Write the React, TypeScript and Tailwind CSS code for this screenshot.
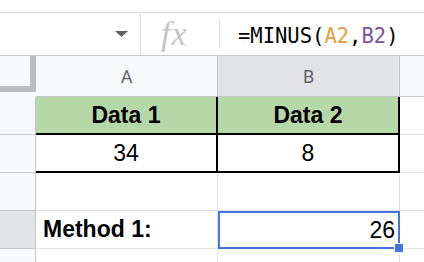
import React from "react";

const sans = "font-['Liberation_Sans',Arial,sans-serif]";

function RowHead({ active = false, h = "h-[38px]" }: { active?: boolean; h?: string }) {
  return (
    <div
      className={`${h} w-[36px] shrink-0 border-r border-b border-[#c4c7c5] ${
        active ? "bg-[#e1e3e6]" : "bg-[#f8f9fa]"
      }`}
    />
  );
}

export default function App() {
  return (
    <div className={`w-[424px] h-[262px] overflow-hidden bg-white ${sans}`}>
      {/* top strip */}
      <div className="h-[13px] border-b border-[#dadce0]" />

      {/* formula bar */}
      <div className="flex h-[43px] items-center border-b border-[#c7c7c7]">
        <div className="flex h-full w-[141px] items-center justify-end border-r border-[#e0e0e0] pr-[12px]">
          <svg width="13" height="6" viewBox="0 0 13 6">
            <path d="M0 0h13L6.5 6z" fill="#5f6368" />
          </svg>
        </div>
        <div className="flex h-full w-[78px] items-center pl-[20px]">
          <span className="font-['Liberation_Serif',serif] text-[34px] italic leading-none tracking-[1px] text-[#c4c4c4]">
            fx
          </span>
        </div>
        <div className="h-[30px] w-px bg-[#e0e0e0]" />
        <div className="mt-[4px] pl-[18px] font-['DejaVu_Sans_Mono',monospace] text-[20.5px] leading-none text-black">
          =MINUS(<span className="text-[#e69f3b]">A2</span>,
          <span className="text-[#7b4fa0]">B2</span>)
        </div>
      </div>

      {/* column headers */}
      <div className="flex h-[41px]">
        <div className="h-full w-[36px] shrink-0 bg-[#f8f9fa]">
          <div className="h-[36px] w-[36px] border-r-[6px] border-b-[6px] border-[#bdbdbd]" />
        </div>
        <div className="flex w-[182px] shrink-0 items-center justify-center border-r border-b border-[#c4c7c5] bg-[#f8f9fa] font-['Roboto',sans-serif] text-[18px] text-[#5f6368]">
          A
        </div>
        <div className="flex w-[182px] shrink-0 items-center justify-center border-r border-b border-[#c4c7c5] bg-[#e1e3e6] font-['Roboto',sans-serif] text-[18px] text-[#5f6368]">
          B
        </div>
        <div className="flex-1 border-b border-[#c4c7c5] bg-[#f8f9fa]" />
      </div>

      {/* row 1 */}
      <div className="flex">
        <RowHead />
        <div className="flex h-[38px] w-[182px] shrink-0 items-center justify-center border-r-2 border-b-2 border-black bg-[#b6d7a8] text-[23px] font-bold">
          Data 1
        </div>
        <div className="flex h-[38px] w-[182px] shrink-0 items-center justify-center border-r-2 border-b-2 border-black bg-[#b6d7a8] text-[23px] font-bold">
          Data 2
        </div>
        <div className="h-[38px] flex-1 border-b border-[#e2e2e2]" />
      </div>

      {/* row 2 */}
      <div className="flex">
        <RowHead />
        <div className="flex h-[38px] w-[182px] shrink-0 items-center justify-center border-r-2 border-b-2 border-black text-[23px]">
          34
        </div>
        <div className="flex h-[38px] w-[182px] shrink-0 items-center justify-center border-r-2 border-b-2 border-black text-[23px]">
          8
        </div>
        <div className="h-[38px] flex-1 border-b border-[#e2e2e2]" />
      </div>

      {/* row 3 */}
      <div className="flex">
        <RowHead />
        <div className="h-[38px] w-[182px] shrink-0 border-r border-b border-[#e2e2e2]" />
        <div className="h-[38px] w-[182px] shrink-0 border-r border-b border-[#e2e2e2]" />
        <div className="h-[38px] flex-1 border-b border-[#e2e2e2]" />
      </div>

      {/* row 4 */}
      <div className="flex">
        <RowHead active />
        <div className="flex h-[38px] w-[182px] shrink-0 items-center border-r border-b border-[#e2e2e2] pl-[7px] text-[23px] font-bold">
          Method 1:
        </div>
        <div className="relative flex h-[38px] w-[182px] shrink-0 items-center justify-end border-2 border-[#4374e0] pr-[3px] text-[23px]">
          26
          <div className="absolute -right-[6px] -bottom-[6px] h-[10px] w-[10px] border border-white bg-[#4374e0]" />
        </div>
        <div className="h-[38px] flex-1 border-b border-[#e2e2e2]" />
      </div>

      {/* row 5 */}
      <div className="flex">
        <RowHead h="h-[20px]" />
        <div className="h-[20px] w-[182px] shrink-0 border-r border-[#e2e2e2]" />
        <div className="h-[20px] w-[182px] shrink-0 border-r border-[#e2e2e2]" />
      </div>
    </div>
  );
}
